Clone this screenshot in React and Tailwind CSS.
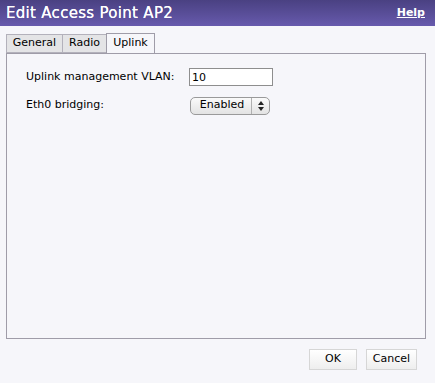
import React, { useState } from 'react'

const tabs = [
  { name: 'General', w: 'w-[56px]' },
  { name: 'Radio', w: 'w-[44px]' },
  { name: 'Uplink', w: 'w-[49px]' },
]

const App = () => {
  const [active, setActive] = useState('Uplink')
  const [vlan, setVlan] = useState('10')

  return (
    <div className="w-[435px] h-[383px] bg-[#f6f6fa] flex flex-col font-['DejaVu_Sans',Verdana,sans-serif] text-[11px] text-black">
      <div className="h-[26px] flex items-center justify-between px-[6px] bg-gradient-to-b from-[#4a4182] to-[#675aad]">
        <span className="text-white text-[15px] tracking-[0.3px] [text-shadow:0_0_0.4px_white]">Edit Access Point AP2</span>
        <a href="#" className="text-white text-[11px] font-bold underline mr-[4px]">Help</a>
      </div>

      <div className="flex px-[6px] mt-[7px]">
        {tabs.map((t) => (
          <button
            key={t.name}
            onClick={() => setActive(t.name)}
            className={
              active === t.name
                ? `${t.w} h-[20px] border border-b-0 border-[#9f9ca8] bg-[#f6f6fa] -mb-px relative z-10`
                : `${t.w} h-[19px] mt-[1px] border border-r-0 border-[#b3b1bb] bg-[#e4e4e6]`
            }
          >
            {t.name}
          </button>
        ))}
      </div>

      <div className="mx-[6px] mr-[9px] h-[286px] border border-[#9f9ca8] pt-[14px] pl-[19px]">
        <div className="flex items-center h-[18px]">
          <span className="w-[163px]">Uplink management VLAN:</span>
          <input
            value={vlan}
            onChange={(e) => setVlan(e.target.value)}
            className="w-[84px] h-[18px] border border-[#8e8e8e] bg-white px-[2px] text-[11px] outline-none"
          />
        </div>
        <div className="flex items-center h-[19px] mt-[10px]">
          <span className="w-[164px]">Eth0 bridging:</span>
          <div className="w-[80px] h-[18px] rounded-[5px] border border-[#9a9a9a] bg-gradient-to-b from-[#fafafa] to-[#e3e3e3] flex items-center">
            <span className="flex-1 text-center pl-[2px]">Enabled</span>
            <span className="w-[18px] h-full border-l border-[#b0b0b0] flex items-center justify-center">
              <svg width="6" height="10" viewBox="0 0 6 10">
                <path d="M3 0 L6 4 L0 4 Z M0 6 L6 6 L3 10 Z" fill="#222" />
              </svg>
            </span>
          </div>
        </div>
      </div>

      <div className="flex justify-end gap-[9px] pr-[18px] mt-[10px]">
        <button className="w-[48px] h-[21px] bg-gradient-to-b from-[#ffffff] to-[#eeeeee] border border-[#d6d6d6] text-[11px]">OK</button>
        <button className="w-[51px] h-[21px] bg-gradient-to-b from-[#ffffff] to-[#eeeeee] border border-[#d6d6d6] text-[11px]">Cancel</button>
      </div>
    </div>
  )
}

export default App
